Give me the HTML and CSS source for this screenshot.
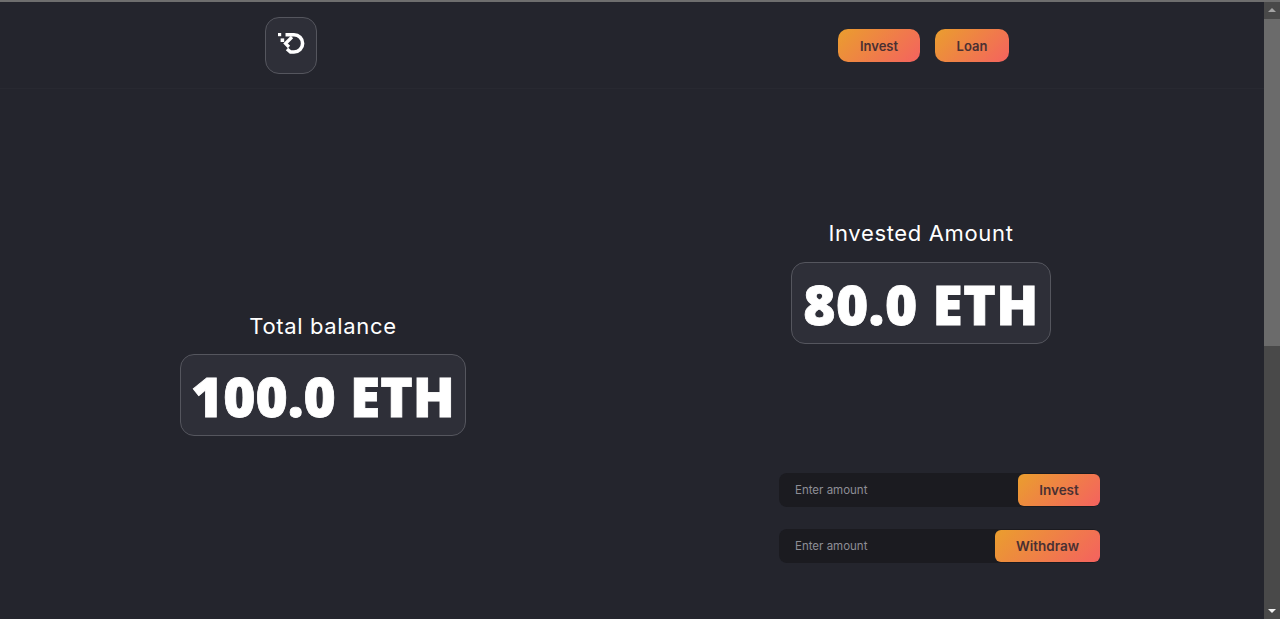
FILE: index.html
```html
<!DOCTYPE html>
<html lang="en">
<head>
  <meta charset="UTF-8" />
  <meta name="viewport" content="width=device-width, initial-scale=1" />
  <title>Dashboard</title>
  <link rel="stylesheet" href="styles.css">
</head>
<body>
  <div class="window">
    <div class="page">
      <header class="header">
        <a class="logo" href="#">
          <svg width="28" height="26" viewBox="0 0 28 26" fill="none">
            <path d="M8.5 3.8h8.5a8.6 8.6 0 0 1 0 17.2h-3.5l-3.5-3" stroke="#fff" stroke-width="3.6"/>
            <path d="M15 6l-6.5 6.5 3.5 3.5" stroke="#fff" stroke-width="3.2"/>
            <rect x="1" y="2" width="3.2" height="3.2" fill="#fff"/>
            <rect x="3.6" y="7.4" width="3.6" height="3.6" fill="#fff"/>
          </svg>
        </a>
        <nav class="nav">
          <button class="button nav-button invest-link">Invest</button>
          <button class="button nav-button loan-link">Loan</button>
        </nav>
      </header>

      <main class="main">
        <section class="left">
          <h2 class="stat-label">Total balance</h2>
          <div class="stat-card balance-card">100.0 ETH</div>
        </section>

        <section class="right">
          <div class="invested">
            <h2 class="stat-label">Invested Amount</h2>
            <div class="stat-card invested-card">80.0 ETH</div>
          </div>
          <form class="amount-form">
            <input class="amount-input" type="text" placeholder="Enter amount" />
            <button class="button form-button invest-button" type="button">Invest</button>
          </form>
          <form class="amount-form">
            <input class="amount-input" type="text" placeholder="Enter amount" />
            <button class="button form-button withdraw-button" type="button">Withdraw</button>
          </form>
        </section>
      </main>
    </div>

    <div class="scrollbar">
      <span class="arrow-up"></span>
      <div class="track"><div class="thumb"></div></div>
      <span class="arrow-down"></span>
    </div>
  </div>
</body>
</html>
```

FILE: styles.css
```css
* {
  margin: 0;
  padding: 0;
  box-sizing: border-box;
}
html, body {
  height: 100%;
  overflow: hidden;
}
body {
  background: #24252d;
  color: white;
  font-family: Inter, "Noto Sans", sans-serif;
}
.window {
  height: 100%;
  display: flex;
  border-top: 2px solid #6e6e6e;
}
.page {
  flex: 1;
  min-width: 0;
}
.header {
  height: 87px;
  display: flex;
  align-items: flex-start;
  padding: 15px 0 0 265px;
  border-bottom: 1px solid #282931;
}
.logo {
  width: 52px;
  height: 57px;
  display: flex;
  align-items: flex-start;
  justify-content: center;
  padding-top: 13px;
  background: #2e2f38;
  border: 1px solid #55565e;
  border-radius: 14px;
}
.nav {
  display: flex;
  gap: 15px;
  margin: 12px 0 0 521px;
}
.button {
  border: none;
  background: linear-gradient(135deg, #ea9e2e, #f4625f);
  color: #4a3032;
  font-family: Inter, "Noto Sans", sans-serif;
  font-weight: 600;
  font-size: 13px;
  cursor: pointer;
}
.nav-button {
  height: 33px;
  border-radius: 10px;
}
.invest-link {
  width: 82px;
}
.loan-link {
  width: 74px;
}
.main {
  display: flex;
}
.left {
  width: 646px;
  padding-top: 222px;
  display: flex;
  flex-direction: column;
  align-items: center;
}
.right {
  padding-top: 129px;
}
.invested {
  width: 260px;
  margin-left: 145px;
  display: flex;
  flex-direction: column;
  align-items: center;
}
.stat-label {
  font-weight: 400;
  font-size: 22px;
  letter-spacing: 0.65px;
  line-height: 30px;
  margin-bottom: 13px;
  white-space: nowrap;
}
.invested .stat-label {
  margin-bottom: 14px;
}
.stat-card {
  height: 82px;
  display: flex;
  align-items: center;
  justify-content: center;
  background: #2e2f38;
  border: 1px solid #55565e;
  border-radius: 14px;
  font-family: "Open Sans", sans-serif;
  font-weight: 800;
  font-size: 55px;
  -webkit-text-stroke: 0.8px white;
  white-space: nowrap;
}
.balance-card {
  width: 286px;
}
.invested-card {
  width: 260px;
  letter-spacing: 0.5px;
}
.amount-form {
  width: 321px;
  height: 34px;
  margin-left: 133px;
  display: flex;
  align-items: center;
  background: #1b1b20;
  border-radius: 8px;
}
.invested + .amount-form {
  margin-top: 129px;
}
.amount-form + .amount-form {
  margin-top: 22px;
}
.amount-input {
  flex: 1;
  min-width: 0;
  height: 100%;
  padding-left: 16px;
  background: transparent;
  border: none;
  outline: none;
  color: white;
  font-family: Inter, "Noto Sans", sans-serif;
  font-size: 11.5px;
}
.amount-input::placeholder {
  color: #8e8e96;
  opacity: 1;
}
.form-button {
  height: 32px;
  border-radius: 6px;
  font-size: 13.5px;
}
.invest-button {
  width: 82px;
}
.withdraw-button {
  width: 105px;
}
.scrollbar {
  width: 16px;
  display: flex;
  flex-direction: column;
  align-items: center;
  background: #494949;
}
.track {
  flex: 1;
  width: 100%;
  padding-top: 2px;
}
.thumb {
  height: 327px;
  background: #6b6b6b;
}
.arrow-up, .arrow-down {
  width: 0;
  height: 0;
  margin: 6px 0 5px;
  border-left: 4px solid transparent;
  border-right: 4px solid transparent;
}
.arrow-up {
  border-bottom: 4px solid #a3a3a3;
}
.arrow-down {
  margin: 5px 0 6px;
  border-top: 4px solid #f1f1f1;
}
```
